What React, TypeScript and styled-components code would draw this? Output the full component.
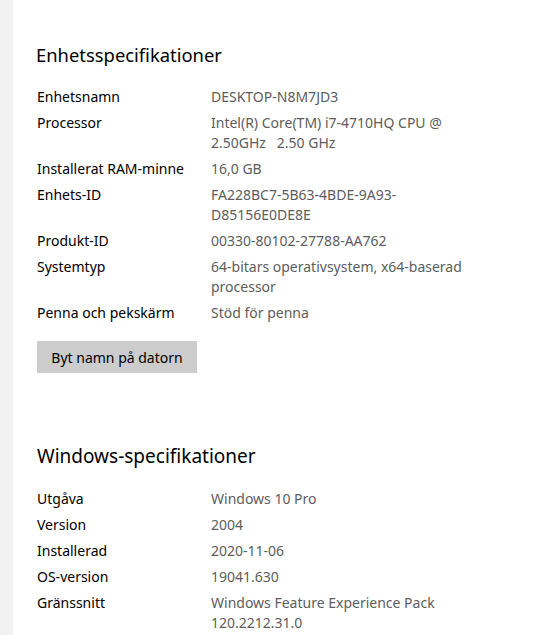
import { createGlobalStyle } from "styled-components";
import styled from "styled-components";

const GlobalStyle = createGlobalStyle`
  html, body {
    margin: 0;
    padding: 0;
    background: #ffffff;
  }
  body {
    font-family: "Noto Sans", "Open Sans", "Liberation Sans", sans-serif;
  }
`;

interface Spec {
  label: string;
  value: string[];
}

const deviceSpecs: Spec[] = [
  { label: "Enhetsnamn", value: ["DESKTOP-N8M7JD3"] },
  { label: "Processor", value: ["Intel(R) Core(TM) i7-4710HQ CPU @", "2.50GHz   2.50 GHz"] },
  { label: "Installerat RAM-minne", value: ["16,0 GB"] },
  { label: "Enhets-ID", value: ["FA228BC7-5B63-4BDE-9A93-", "D85156E0DE8E"] },
  { label: "Produkt-ID", value: ["00330-80102-27788-AA762"] },
  { label: "Systemtyp", value: ["64-bitars operativsystem, x64-baserad", "processor"] },
  { label: "Penna och pekskärm", value: ["Stöd för penna"] },
];

const windowsSpecs: Spec[] = [
  { label: "Utgåva", value: ["Windows 10 Pro"] },
  { label: "Version", value: ["2004"] },
  { label: "Installerad", value: ["2020-11-06"] },
  { label: "OS-version", value: ["19041.630"] },
  { label: "Gränssnitt", value: ["Windows Feature Experience Pack", "120.2212.31.0"] },
];

function SpecTable({ specs }: { specs: Spec[] }) {
  return (
    <Table>
      {specs.map((s) => (
        <Row key={s.label}>
          <Label>{s.label}</Label>
          <Value>
            {s.value.map((line, i) => (
              <Line key={i}>{line}</Line>
            ))}
          </Value>
        </Row>
      ))}
    </Table>
  );
}

export default function App() {
  return (
    <>
      <GlobalStyle />
      <Page>
        <Sidebar />
        <Main>
          <Section>
            <Heading>Enhetsspecifikationer</Heading>
            <SpecTable specs={deviceSpecs} />
            <Button>Byt namn på datorn</Button>
          </Section>
          <Section $second>
            <Heading $second>Windows-specifikationer</Heading>
            <SpecTable specs={windowsSpecs} />
          </Section>
        </Main>
      </Page>
    </>
  );
}

const Page = styled.div`
  display: flex;
  width: 537px;
  height: 635px;
  overflow: hidden;
  background: #ffffff;
`;

const Sidebar = styled.div`
  width: 13px;
  flex-shrink: 0;
  background: #f2f2f2;
`;

const Main = styled.main`
  flex: 1;
  padding-left: 24px;
  display: flex;
  flex-direction: column;
`;

const Section = styled.section<{ $second?: boolean }>`
  display: flex;
  flex-direction: column;
  padding-top: ${(p) => (p.$second ? "69px" : "41px")};
`;

const Heading = styled.h2<{ $second?: boolean }>`
  margin: 0 0 ${(p) => (p.$second ? "19px" : "18px")} ${(p) => (p.$second ? "0" : "-1px")};
  font-size: ${(p) => (p.$second ? "19px" : "18.4px")};
  font-weight: 400;
  line-height: 28px;
  color: #000000;
`;

const Table = styled.div`
  display: flex;
  flex-direction: column;
  gap: 6px;
`;

const Row = styled.div`
  display: grid;
  grid-template-columns: 174px 1fr;
  font-size: 14px;
  line-height: 20px;
`;

const Label = styled.div`
  color: #000000;
`;

const Value = styled.div`
  color: #5d5d5d;
  white-space: pre;
`;

const Line = styled.div``;

const Button = styled.button`
  margin-top: 18px;
  width: 160px;
  height: 32px;
  border: none;
  padding: 0;
  background: #cccccc;
  color: #000000;
  font-family: inherit;
  font-size: 14px;
`;
